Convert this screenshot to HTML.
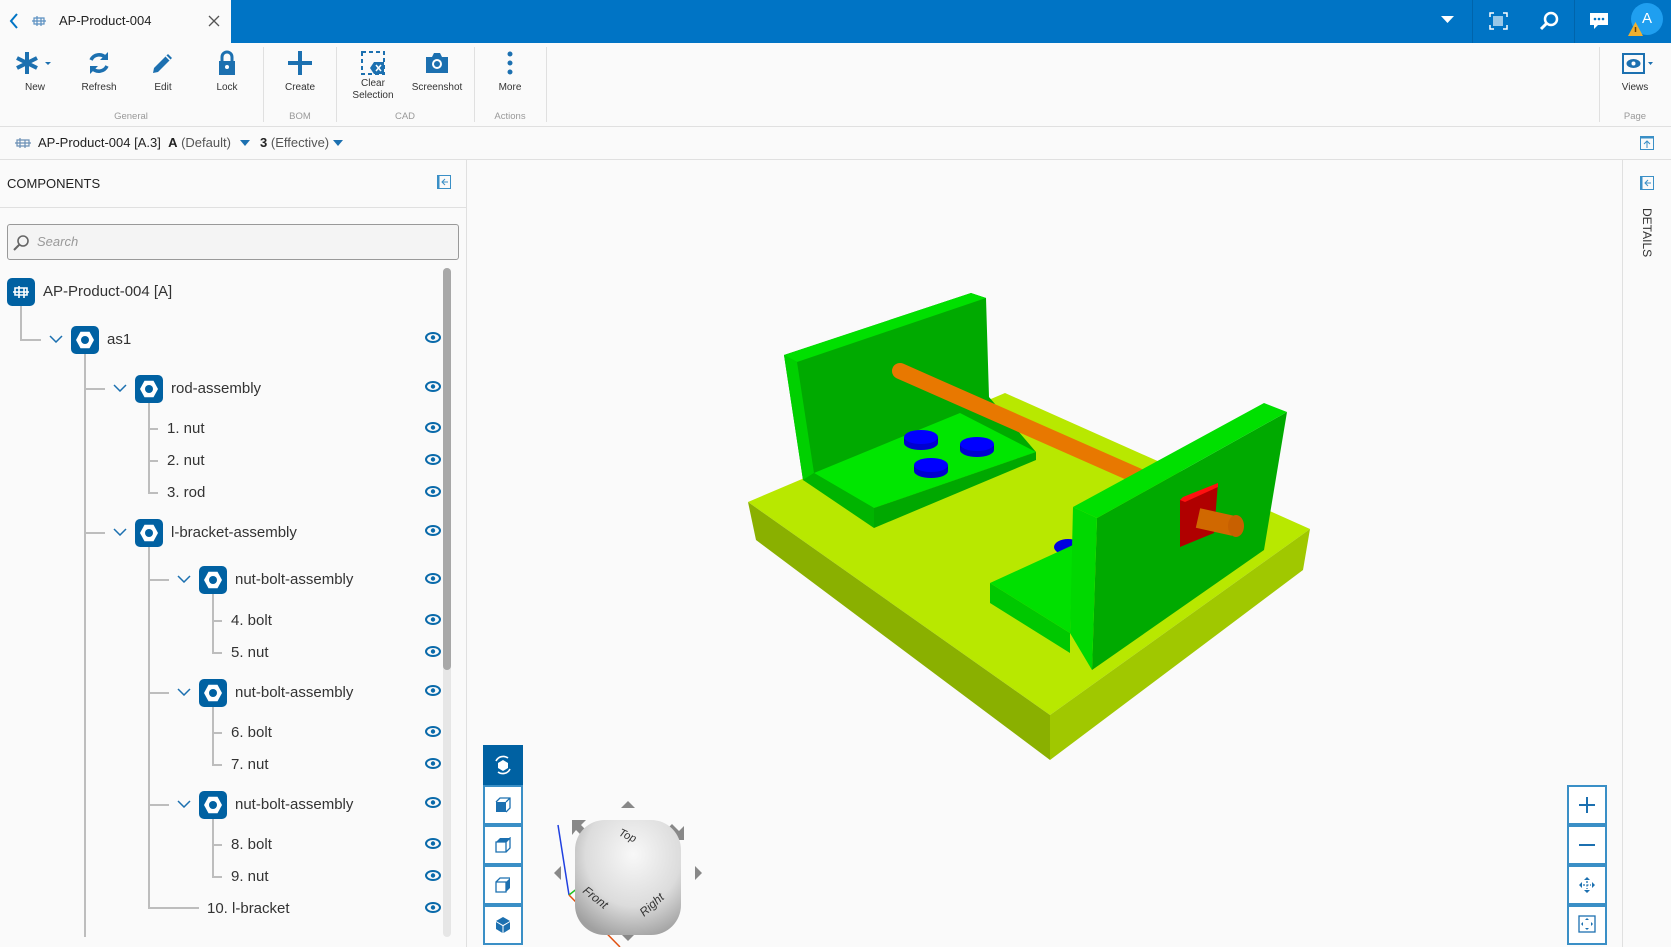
<!DOCTYPE html>
<html><head><meta charset="utf-8"><style>
*{margin:0;padding:0;box-sizing:border-box}
body{width:1671px;height:947px;overflow:hidden;background:#fafafa;font-family:"Liberation Sans",sans-serif;color:#333;position:relative}
.a{position:absolute}
.tb{position:absolute;top:50px;width:64px;text-align:center;font-size:10px;color:#333}
.tb svg{display:block;margin:0 auto 6px}
.grp{position:absolute;top:111px;font-size:9.5px;color:#999;text-align:center}
.sep{position:absolute;top:47px;width:1px;height:75px;background:#e0e0e0}
.row{position:absolute;font-size:15px;color:#333;white-space:nowrap}
.ic{position:absolute;width:28px;height:28px;border-radius:5px;background:#0061a2}
.ic:after{content:"";position:absolute;left:5px;top:5px;width:18px;height:18px;background:#fff;clip-path:polygon(25% 4%,75% 4%,100% 50%,75% 96%,25% 96%,0 50%)}
.ic:before{content:"";position:absolute;left:10px;top:10px;width:8px;height:8px;border-radius:50%;background:#0061a2;z-index:2}
.eye{position:absolute;left:425px}
.vl{position:absolute;background:#bdbdbd;width:2px}
.hl{position:absolute;background:#bdbdbd;height:2px}
.chev{position:absolute}
.vb{position:absolute;left:483px;width:40px;height:40px;background:#fff;border:2px solid #3a8fc6}
.zb{position:absolute;left:1567px;width:40px;height:40px;background:#fff;border:2px solid #3a8fc6}
</style></head><body>
<!-- header -->
<div class="a" style="left:0;top:0;width:231px;height:43px;background:#fafafa"></div>
<div class="a" style="left:231px;top:0;width:1440px;height:43px;background:#0074c5"></div>
<svg class="a" style="left:9px;top:12px" width="10" height="18"><path d="M8 2 L2 9 L8 16" fill="none" stroke="#0074c5" stroke-width="2"/></svg>
<svg class="a" style="left:31px;top:14px" width="16" height="14"><path d="M1 7H15M6 2v10M10 4v8M3 4h10v6H3z" fill="none" stroke="#5a8fc0" stroke-width="1.2"/></svg>
<div class="a" style="left:59px;top:13px;font-size:13px;color:#222">AP-Product-004</div>
<svg class="a" style="left:208px;top:15px" width="12" height="12"><path d="M1 1L11 11M11 1L1 11" stroke="#555" stroke-width="1.3"/></svg>
<svg class="a" style="left:1441px;top:16px" width="13" height="8"><path d="M0 0H13L6.5 7z" fill="#fff"/></svg>
<div class="a" style="left:1472px;top:0;width:1px;height:43px;background:#0064ab"></div>
<div class="a" style="left:1574px;top:0;width:1px;height:43px;background:#0064ab"></div>
<svg class="a" style="left:1489px;top:12px" width="19" height="18"><path d="M1 5V1H5M14 1H18V5M18 13V17H14M5 17H1V13" fill="none" stroke="#fff" stroke-width="1.5"/><path d="M5 4v10M7 4v10M9 4v10M11 4v10M13 4v10" stroke="#fff" stroke-width="1.2"/></svg>
<svg class="a" style="left:1539px;top:11px" width="20" height="20"><circle cx="12" cy="8" r="6" fill="none" stroke="#fff" stroke-width="2.5"/><path d="M8 12L2 18" stroke="#fff" stroke-width="3"/></svg>
<svg class="a" style="left:1589px;top:12px" width="20" height="18"><path d="M1 1H19V13H9L5 17V13H1z" fill="#fff"/><circle cx="6" cy="7" r="1.3" fill="#0074c5"/><circle cx="10" cy="7" r="1.3" fill="#0074c5"/><circle cx="14" cy="7" r="1.3" fill="#0074c5"/></svg>
<div class="a" style="left:1631px;top:3px;width:32px;height:32px;border-radius:50%;background:#1f9ff0;color:#fff;font-size:15px;text-align:center;line-height:32px">A</div>
<svg class="a" style="left:1628px;top:22px" width="15" height="14"><path d="M7.5 0L15 14H0z" fill="#f0b030"/><path d="M7.5 5V10" stroke="#704000" stroke-width="1.5"/></svg>

<!-- toolbar -->
<div class="a" style="left:0;top:43px;width:1671px;height:84px;background:#fafafa;border-bottom:1px solid #e0e0e0"></div>
<div class="tb" style="left:3px"><svg width="40" height="26"><path d="M12 2V24M2 8L22 18M2 18L22 8" stroke="#1c70b0" stroke-width="4"/><path d="M30 12H36L33 15z" fill="#1c70b0"/></svg>New</div>
<div class="tb" style="left:67px"><svg width="26" height="26"><path d="M20 8A9 9 0 0 0 5 10M6 18A9 9 0 0 0 21 16" fill="none" stroke="#1c70b0" stroke-width="3.5"/><path d="M22 2V10H14z M4 24V16H12z" fill="#1c70b0"/></svg>Refresh</div>
<div class="tb" style="left:131px"><svg width="26" height="26"><path d="M4 18L18 4L22 8L8 22L3 23z" fill="#1c70b0"/><path d="M16 6L20 10" stroke="#fff" stroke-width="1.5"/></svg>Edit</div>
<div class="tb" style="left:195px"><svg width="26" height="26"><path d="M8 11V7A5 5 0 0 1 18 7V11" fill="none" stroke="#1c70b0" stroke-width="3"/><rect x="5" y="11" width="16" height="14" fill="#1c70b0"/><circle cx="13" cy="17" r="2" fill="#fff"/></svg>Lock</div>
<div class="sep" style="left:263px"></div>
<div class="tb" style="left:268px"><svg width="26" height="26"><path d="M13 1V25M1 13H25" stroke="#1c70b0" stroke-width="4"/></svg>Create</div>
<div class="sep" style="left:336px"></div>
<div class="tb" style="left:341px;line-height:12px"><svg width="26" height="26" style="margin-bottom:2px"><path d="M2 2H24V24H2z" fill="none" stroke="#1c70b0" stroke-width="2" stroke-dasharray="4 3"/><path d="M10 18L14 12H24V24H14z" fill="#1c70b0"/><path d="M16 15L21 21M21 15L16 21" stroke="#fff" stroke-width="1.5"/></svg>Clear<br>Selection</div>
<div class="tb" style="left:405px"><svg width="26" height="26"><path d="M2 7H8L10 3H16L18 7H24V23H2z" fill="#1c70b0"/><circle cx="13" cy="14" r="5" fill="#fff"/><circle cx="13" cy="14" r="3" fill="#1c70b0"/></svg>Screenshot</div>
<div class="sep" style="left:474px"></div>
<div class="tb" style="left:478px"><svg width="26" height="26"><circle cx="13" cy="4" r="2.5" fill="#1c70b0"/><circle cx="13" cy="13" r="2.5" fill="#1c70b0"/><circle cx="13" cy="22" r="2.5" fill="#1c70b0"/></svg>More</div>
<div class="sep" style="left:546px"></div>
<div class="grp" style="left:100px;width:62px">General</div>
<div class="grp" style="left:268px;width:64px">BOM</div>
<div class="grp" style="left:373px;width:64px">CAD</div>
<div class="grp" style="left:478px;width:64px">Actions</div>
<div class="sep" style="left:1599px"></div>
<div class="tb" style="left:1603px"><svg width="40" height="26"><rect x="8" y="4" width="21" height="19" fill="none" stroke="#1c70b0" stroke-width="2"/><ellipse cx="18.5" cy="13.5" rx="7" ry="4.5" fill="#1c70b0"/><circle cx="18.5" cy="13.5" r="2" fill="#fff"/><path d="M33 12H38L35.5 15z" fill="#1c70b0"/></svg>Views</div>
<div class="grp" style="left:1603px;width:64px">Page</div>

<!-- breadcrumb -->
<div class="a" style="left:0;top:127px;width:1671px;height:33px;border-bottom:1px solid #e0e0e0"></div>
<svg class="a" style="left:14px;top:136px" width="18" height="14"><path d="M1 7H17M6 2v10M11 4v8M3 4h12v6H3z" fill="none" stroke="#6b8fb5" stroke-width="1.2"/></svg>
<div class="a" style="left:38px;top:135px;font-size:13px;color:#222">AP-Product-004 [A.3]&nbsp;&nbsp;<b style="font-weight:bold">A</b> <span style="color:#555">(Default)</span></div>
<svg class="a" style="left:240px;top:140px" width="10" height="6"><path d="M0 0H10L5 6z" fill="#1c70b0"/></svg>
<div class="a" style="left:260px;top:135px;font-size:13px;color:#222"><b>3</b> <span style="color:#555">(Effective)</span></div>
<svg class="a" style="left:333px;top:140px" width="10" height="6"><path d="M0 0H10L5 6z" fill="#1c70b0"/></svg>
<svg class="a" style="left:1640px;top:136px" width="14" height="14"><rect x="0.5" y="0.5" width="13" height="13" fill="none" stroke="#3a8fc6"/><rect x="0.5" y="0.5" width="13" height="2" fill="#3a8fc6"/><path d="M7 12V5M4 8L7 5L10 8" fill="none" stroke="#3a8fc6"/></svg>

<!-- left panel -->
<div class="a" style="left:466px;top:160px;width:1px;height:787px;background:#e0e0e0"></div>
<div class="a" style="left:7px;top:176px;font-size:13px;color:#222">COMPONENTS</div>
<svg class="a" style="left:437px;top:175px" width="14" height="14"><rect x="0.5" y="0.5" width="13" height="13" fill="none" stroke="#3a8fc6"/><rect x="0.5" y="0.5" width="2" height="13" fill="#3a8fc6"/><path d="M11 7H5M8 4L5 7L8 10" fill="none" stroke="#3a8fc6"/></svg>
<div class="a" style="left:0;top:207px;width:466px;height:1px;background:#e0e0e0"></div>
<div class="a" style="left:7px;top:224px;width:452px;height:36px;border:1px solid #999;border-radius:3px;background:#f4f4f4"></div>
<svg class="a" style="left:13px;top:234px" width="17" height="17"><circle cx="10" cy="7" r="5" fill="none" stroke="#666" stroke-width="1.6"/><path d="M6 11L1 16" stroke="#666" stroke-width="2"/></svg>
<div class="a" style="left:37px;top:234px;font-size:13px;color:#999;font-style:italic">Search</div>
<div class="a" style="left:443px;top:268px;width:8px;height:669px;background:#e6e6e6;border-radius:4px"></div>
<div class="a" style="left:443px;top:268px;width:8px;height:402px;background:#a8a8a8;border-radius:4px"></div>

<!-- tree lines -->
<div class="vl" style="left:20px;top:306px;height:35px"></div><div class="hl" style="left:20px;top:339px;width:21px"></div>
<div class="vl" style="left:84px;top:354px;height:583px"></div>
<div class="hl" style="left:84px;top:388px;width:21px"></div>
<div class="hl" style="left:84px;top:532px;width:21px"></div>
<div class="vl" style="left:148px;top:403px;height:90px"></div>
<div class="hl" style="left:148px;top:428px;width:10px"></div><div class="hl" style="left:148px;top:460px;width:10px"></div><div class="hl" style="left:148px;top:492px;width:10px"></div>
<div class="vl" style="left:148px;top:547px;height:362px"></div>
<div class="hl" style="left:148px;top:579px;width:21px"></div><div class="hl" style="left:148px;top:692px;width:21px"></div><div class="hl" style="left:148px;top:804px;width:21px"></div>
<div class="hl" style="left:148px;top:907px;width:51px"></div>
<div class="vl" style="left:212px;top:594px;height:59px"></div><div class="hl" style="left:212px;top:620px;width:10px"></div><div class="hl" style="left:212px;top:652px;width:10px"></div>
<div class="vl" style="left:212px;top:707px;height:59px"></div><div class="hl" style="left:212px;top:732px;width:10px"></div><div class="hl" style="left:212px;top:764px;width:10px"></div>
<div class="vl" style="left:212px;top:819px;height:59px"></div><div class="hl" style="left:212px;top:844px;width:10px"></div><div class="hl" style="left:212px;top:876px;width:10px"></div>

<!-- icons -->
<div class="a" style="left:7px;top:278px;width:28px;height:28px;border-radius:5px;background:#0061a2"></div>
<svg class="a" style="left:12px;top:284px" width="18" height="16"><path d="M1 8H17M7 2v12M12 4v10M3 4h12v7H3z" fill="none" stroke="#fff" stroke-width="1.6"/></svg>
<div class="ic" style="left:71px;top:326px"></div>
<div class="ic" style="left:135px;top:375px"></div>
<div class="ic" style="left:135px;top:519px"></div>
<div class="ic" style="left:199px;top:566px"></div>
<div class="ic" style="left:199px;top:679px"></div>
<div class="ic" style="left:199px;top:791px"></div>
<!-- chevrons -->
<svg class="chev" style="left:49px;top:335px" width="14" height="8"><path d="M1 1L7 7L13 1" fill="none" stroke="#1c70b0" stroke-width="1.5"/></svg>
<svg class="chev" style="left:113px;top:384px" width="14" height="8"><path d="M1 1L7 7L13 1" fill="none" stroke="#1c70b0" stroke-width="1.5"/></svg>
<svg class="chev" style="left:113px;top:528px" width="14" height="8"><path d="M1 1L7 7L13 1" fill="none" stroke="#1c70b0" stroke-width="1.5"/></svg>
<svg class="chev" style="left:177px;top:575px" width="14" height="8"><path d="M1 1L7 7L13 1" fill="none" stroke="#1c70b0" stroke-width="1.5"/></svg>
<svg class="chev" style="left:177px;top:688px" width="14" height="8"><path d="M1 1L7 7L13 1" fill="none" stroke="#1c70b0" stroke-width="1.5"/></svg>
<svg class="chev" style="left:177px;top:800px" width="14" height="8"><path d="M1 1L7 7L13 1" fill="none" stroke="#1c70b0" stroke-width="1.5"/></svg>
<!-- labels -->
<div class="row" style="left:43px;top:283px">AP-Product-004 [A]</div>
<div class="row" style="left:107px;top:331px">as1</div>
<div class="row" style="left:171px;top:380px">rod-assembly</div>
<div class="row" style="left:167px;top:420px">1. nut</div>
<div class="row" style="left:167px;top:452px">2. nut</div>
<div class="row" style="left:167px;top:484px">3. rod</div>
<div class="row" style="left:171px;top:524px">l-bracket-assembly</div>
<div class="row" style="left:235px;top:571px">nut-bolt-assembly</div>
<div class="row" style="left:231px;top:612px">4. bolt</div>
<div class="row" style="left:231px;top:644px">5. nut</div>
<div class="row" style="left:235px;top:684px">nut-bolt-assembly</div>
<div class="row" style="left:231px;top:724px">6. bolt</div>
<div class="row" style="left:231px;top:756px">7. nut</div>
<div class="row" style="left:235px;top:796px">nut-bolt-assembly</div>
<div class="row" style="left:231px;top:836px">8. bolt</div>
<div class="row" style="left:231px;top:868px">9. nut</div>
<div class="row" style="left:207px;top:900px">10. l-bracket</div>
<div class="a" style="left:0;top:937px;width:466px;height:10px;background:#fafafa"></div>
<!-- eyes -->
<svg width="0" height="0" style="position:absolute"><defs><g id="eye"><ellipse cx="8" cy="5.5" rx="7" ry="4.5" fill="none" stroke="#0a6aaa" stroke-width="2"/><circle cx="8" cy="5.5" r="2.2" fill="#0a6aaa"/></g></defs></svg>
<svg class="eye" style="top:332px" width="16" height="11"><use href="#eye"/></svg>
<svg class="eye" style="top:381px" width="16" height="11"><use href="#eye"/></svg>
<svg class="eye" style="top:422px" width="16" height="11"><use href="#eye"/></svg>
<svg class="eye" style="top:454px" width="16" height="11"><use href="#eye"/></svg>
<svg class="eye" style="top:486px" width="16" height="11"><use href="#eye"/></svg>
<svg class="eye" style="top:525px" width="16" height="11"><use href="#eye"/></svg>
<svg class="eye" style="top:573px" width="16" height="11"><use href="#eye"/></svg>
<svg class="eye" style="top:614px" width="16" height="11"><use href="#eye"/></svg>
<svg class="eye" style="top:646px" width="16" height="11"><use href="#eye"/></svg>
<svg class="eye" style="top:685px" width="16" height="11"><use href="#eye"/></svg>
<svg class="eye" style="top:726px" width="16" height="11"><use href="#eye"/></svg>
<svg class="eye" style="top:758px" width="16" height="11"><use href="#eye"/></svg>
<svg class="eye" style="top:797px" width="16" height="11"><use href="#eye"/></svg>
<svg class="eye" style="top:838px" width="16" height="11"><use href="#eye"/></svg>
<svg class="eye" style="top:870px" width="16" height="11"><use href="#eye"/></svg>
<svg class="eye" style="top:902px" width="16" height="11"><use href="#eye"/></svg>

<!-- right details -->
<div class="a" style="left:1622px;top:160px;width:1px;height:787px;background:#e0e0e0"></div>
<svg class="a" style="left:1640px;top:176px" width="14" height="14"><rect x="0.5" y="0.5" width="13" height="13" fill="none" stroke="#3a8fc6"/><rect x="0.5" y="0.5" width="2" height="13" fill="#3a8fc6"/><path d="M11 7H5M8 4L5 7L8 10" fill="none" stroke="#3a8fc6"/></svg>
<div class="a" style="left:1640px;top:208px;font-size:12px;color:#333;writing-mode:vertical-rl">DETAILS</div>

<!-- 3D model -->
<svg class="a" style="left:0;top:0" width="1671" height="947" viewBox="0 0 1671 947">
<polygon points="748,502 1005,393 1310,529 1050,715" fill="#b8e800"/>
<polygon points="748,502 1050,715 1050,760 756,540" fill="#8ab000"/>
<polygon points="1050,715 1310,529 1303,570 1050,760" fill="#a0c800"/>
<!-- back bracket -->
<polygon points="784,355 971,293 986,298 989,397 1036,452 874,508 803,480" fill="#00aa00"/>
<polygon points="784,355 971,293 986,298 797,362" fill="#00e000"/>
<polygon points="784,355 797,362 814,473 803,480" fill="#00d000"/>
<polygon points="814,473 960,413 1036,452 874,508" fill="#00e600"/>
<polygon points="814,473 874,508 874,528 803,480" fill="#00b400"/>
<polygon points="874,508 1036,452 1036,460 874,528" fill="#00a800"/>
<g fill="#0000b0"><rect x="904" y="437" width="34" height="6"/><rect x="960" y="444" width="34" height="6"/><rect x="914" y="465" width="34" height="6"/></g>
<g fill="#0000d0"><ellipse cx="921" cy="443" rx="17" ry="7"/><ellipse cx="977" cy="450" rx="17" ry="7"/><ellipse cx="931" cy="471" rx="17" ry="7"/></g>
<g fill="#0000ff"><ellipse cx="921" cy="437" rx="17" ry="7"/><ellipse cx="977" cy="444" rx="17" ry="7"/><ellipse cx="931" cy="465" rx="17" ry="7"/></g>
<ellipse cx="1068" cy="547" rx="14" ry="8" fill="#0000e0"/>
<line x1="900" y1="371" x2="1140" y2="477" stroke="#e87800" stroke-width="16" stroke-linecap="round"/>
<!-- front bracket -->
<polygon points="990,583 1073,545 1070,633" fill="#00e000"/>
<polygon points="990,583 1070,633 1070,653 990,603" fill="#00c800"/>
<polygon points="1097,518 1287,412 1264,550 1092,670" fill="#00aa00"/>
<polygon points="1073,507 1264,403 1287,412 1097,518" fill="#00e000"/>
<polygon points="1073,507 1097,518 1092,670 1070,633" fill="#00d800"/>
<polygon points="1180,500 1218,483 1214,533 1180,547" fill="#b00000"/>
<polygon points="1180,500 1183,497 1218,483 1218,487 1185,502" fill="#ff1010"/>
<line x1="1198" y1="518" x2="1234" y2="526" stroke="#d06800" stroke-width="20"/>
<ellipse cx="1236" cy="526" rx="8" ry="11" fill="#c86000"/>
</svg>

<!-- view toolbar -->
<div class="vb" style="top:745px;background:#0061a2;border-color:#0061a2"></div>
<svg class="a" style="left:493px;top:755px" width="20" height="20"><path d="M5 8L10 5L15 8V13L10 16L5 13z" fill="#fff"/><path d="M3 6A8 8 0 0 1 15 3M17 14A8 8 0 0 1 5 17" fill="none" stroke="#fff" stroke-width="1.6"/></svg>
<div class="vb" style="top:785px"></div>
<svg class="a" style="left:495px;top:797px" width="16" height="16"><path d="M1 5H11V15H1z" fill="#1c70b0"/><path d="M1 5L5 1H15V11L11 15M11 5L15 1" fill="none" stroke="#1c70b0" stroke-width="1.3"/></svg>
<div class="vb" style="top:825px"></div>
<svg class="a" style="left:495px;top:837px" width="16" height="16"><path d="M1 5L5 1H15L11 5z" fill="#1c70b0"/><path d="M1 5H11V15H1zM11 5L15 1V11L11 15" fill="none" stroke="#1c70b0" stroke-width="1.3"/></svg>
<div class="vb" style="top:865px"></div>
<svg class="a" style="left:495px;top:877px" width="16" height="16"><path d="M11 5L15 1V11L11 15z" fill="#1c70b0"/><path d="M1 5L5 1H15M1 5H11V15H1z" fill="none" stroke="#1c70b0" stroke-width="1.3"/></svg>
<div class="vb" style="top:905px"></div>
<svg class="a" style="left:495px;top:916px" width="16" height="18"><path d="M8 1L15 5L8 9L1 5z M1 6L7.5 10V17L1 13z M15 6L8.5 10V17L15 13z" fill="#1c70b0"/></svg>

<!-- nav cube -->
<svg class="a" style="left:550px;top:795px" width="160" height="152">
<path d="M78 6L85 13H71z" fill="#888"/>
<path d="M78 146L85 139H71z" fill="#888"/>
<path d="M4 78L11 71V85z" fill="#888"/>
<path d="M152 78L145 71V85z" fill="#888"/>
<path d="M22 25L36 25L31 30L38 37L33 42L26 35L22 40z" fill="#888"/>
<path d="M134 45L134 31L129 36L122 29L117 34L124 41L119 45z" fill="#888"/>
<path d="M8 30L19 100" stroke="#2040e0" stroke-width="1.5"/>
<path d="M19 100L38 85" stroke="#20c020" stroke-width="1.5"/>
<path d="M19 100L70 152" stroke="#e05010" stroke-width="1.5"/>
<defs><radialGradient id="cg" cx="55%" cy="30%" r="75%"><stop offset="0" stop-color="#f8f8f8"/><stop offset="0.6" stop-color="#dcdcdc"/><stop offset="1" stop-color="#a0a0a0"/></radialGradient></defs>
<rect x="25" y="25" width="106" height="115" rx="30" fill="url(#cg)"/>
<text x="68" y="40" font-size="11" fill="#333" transform="rotate(25 68 40)" font-family="Liberation Sans,sans-serif" font-style="italic">Top</text>
<text x="32" y="97" font-size="12" fill="#333" transform="rotate(38 32 97)" font-family="Liberation Sans,sans-serif" font-style="italic">Front</text>
<text x="94" y="122" font-size="12" fill="#333" transform="rotate(-42 94 122)" font-family="Liberation Sans,sans-serif" font-style="italic">Right</text>
</svg>

<!-- zoom toolbar -->
<div class="zb" style="top:785px"></div>
<svg class="a" style="left:1577px;top:795px" width="20" height="20"><path d="M10 2V18M2 10H18" stroke="#1c70b0" stroke-width="2"/></svg>
<div class="zb" style="top:825px"></div>
<svg class="a" style="left:1577px;top:835px" width="20" height="20"><path d="M2 10H18" stroke="#1c70b0" stroke-width="2"/></svg>
<div class="zb" style="top:865px"></div>
<svg class="a" style="left:1578px;top:876px" width="18" height="18"><path d="M9 1L12 4H6zM9 17L12 14H6zM1 9L4 6V12zM17 9L14 6V12z" fill="#1c70b0"/><path d="M9 5V13M5 9H13" stroke="#1c70b0" stroke-width="1.3" stroke-dasharray="2 1.5"/></svg>
<div class="zb" style="top:905px"></div>
<svg class="a" style="left:1578px;top:915px" width="18" height="18"><rect x="1" y="1" width="16" height="16" fill="none" stroke="#1c70b0" stroke-width="1.3"/><path d="M9 3L11 5H7zM9 15L11 13H7zM3 9L5 7V11zM15 9L13 7V11z" fill="#1c70b0"/></svg>
</body></html>
